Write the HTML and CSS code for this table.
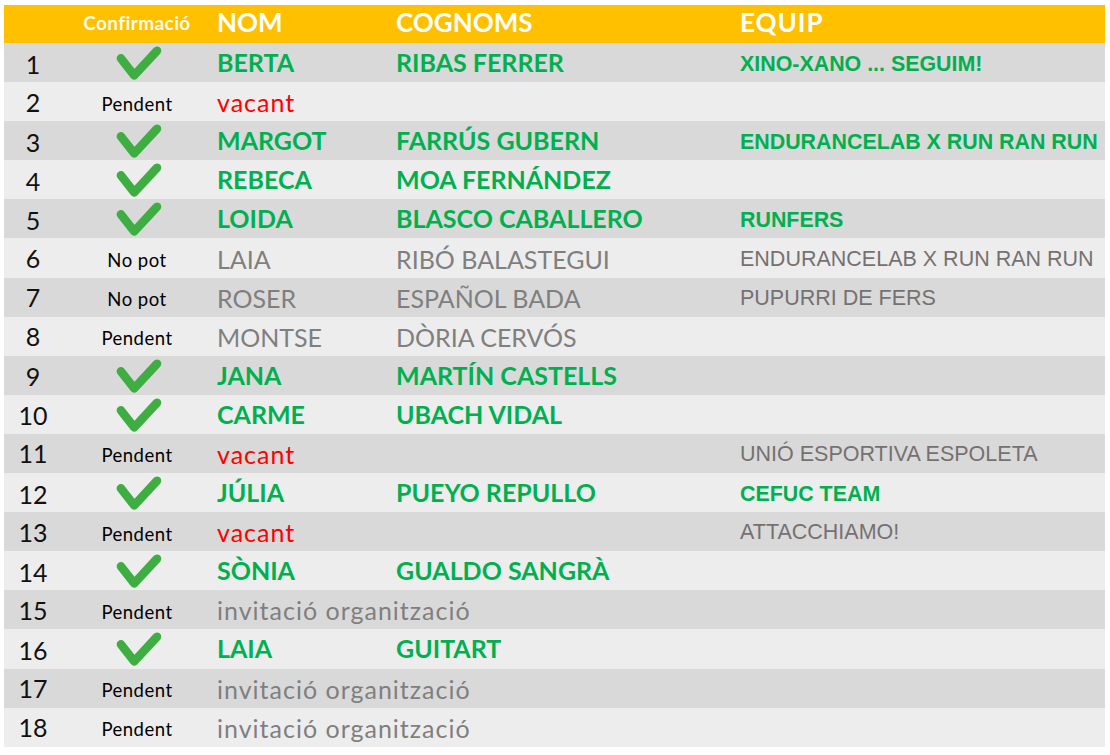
FILE: index.html
```html
<!DOCTYPE html>
<html lang="ca">
<head>
<meta charset="utf-8">
<title>Confirmacions</title>
<link rel="stylesheet" href="styles.css">
</head>
<body>
<div class="table">
  <div class="row head">
    <div class="c-num"></div>
    <div class="c-conf">Confirmació</div>
    <div class="c-name">NOM</div>
    <div class="c-sur">COGNOMS</div>
    <div class="c-team">EQUIP</div>
  </div>

  <div class="row dark">
    <div class="c-num">1</div>
    <div class="c-conf"><svg class="check" viewBox="0 0 50 40"><polyline points="7,13 21,31 45,5"/></svg></div>
    <div class="c-name ok">BERTA</div>
    <div class="c-sur ok">RIBAS FERRER</div>
    <div class="c-team okb">XINO-XANO ... SEGUIM!</div>
  </div>
  <div class="row light">
    <div class="c-num">2</div>
    <div class="c-conf st">Pendent</div>
    <div class="c-name red">vacant</div>
    <div class="c-sur"></div>
    <div class="c-team"></div>
  </div>
  <div class="row dark">
    <div class="c-num">3</div>
    <div class="c-conf"><svg class="check" viewBox="0 0 50 40"><polyline points="7,13 21,31 45,5"/></svg></div>
    <div class="c-name ok">MARGOT</div>
    <div class="c-sur ok">FARRÚS GUBERN</div>
    <div class="c-team okb">ENDURANCELAB X RUN RAN RUN</div>
  </div>
  <div class="row light">
    <div class="c-num">4</div>
    <div class="c-conf"><svg class="check" viewBox="0 0 50 40"><polyline points="7,13 21,31 45,5"/></svg></div>
    <div class="c-name ok">REBECA</div>
    <div class="c-sur ok">MOA FERNÁNDEZ</div>
    <div class="c-team"></div>
  </div>
  <div class="row dark">
    <div class="c-num">5</div>
    <div class="c-conf"><svg class="check" viewBox="0 0 50 40"><polyline points="7,13 21,31 45,5"/></svg></div>
    <div class="c-name ok">LOIDA</div>
    <div class="c-sur ok">BLASCO CABALLERO</div>
    <div class="c-team okb">RUNFERS</div>
  </div>
  <div class="row light">
    <div class="c-num">6</div>
    <div class="c-conf st">No pot</div>
    <div class="c-name grey">LAIA</div>
    <div class="c-sur grey">RIBÓ BALASTEGUI</div>
    <div class="c-team greyt">ENDURANCELAB X RUN RAN RUN</div>
  </div>
  <div class="row dark">
    <div class="c-num">7</div>
    <div class="c-conf st">No pot</div>
    <div class="c-name grey">ROSER</div>
    <div class="c-sur grey">ESPAÑOL BADA</div>
    <div class="c-team greyt">PUPURRI DE FERS</div>
  </div>
  <div class="row light">
    <div class="c-num">8</div>
    <div class="c-conf st">Pendent</div>
    <div class="c-name grey">MONTSE</div>
    <div class="c-sur grey">DÒRIA CERVÓS</div>
    <div class="c-team"></div>
  </div>
  <div class="row dark">
    <div class="c-num">9</div>
    <div class="c-conf"><svg class="check" viewBox="0 0 50 40"><polyline points="7,13 21,31 45,5"/></svg></div>
    <div class="c-name ok">JANA</div>
    <div class="c-sur ok">MARTÍN CASTELLS</div>
    <div class="c-team"></div>
  </div>
  <div class="row light">
    <div class="c-num">10</div>
    <div class="c-conf"><svg class="check" viewBox="0 0 50 40"><polyline points="7,13 21,31 45,5"/></svg></div>
    <div class="c-name ok">CARME</div>
    <div class="c-sur ok">UBACH VIDAL</div>
    <div class="c-team"></div>
  </div>
  <div class="row dark">
    <div class="c-num">11</div>
    <div class="c-conf st">Pendent</div>
    <div class="c-name red">vacant</div>
    <div class="c-sur"></div>
    <div class="c-team greyt">UNIÓ ESPORTIVA ESPOLETA</div>
  </div>
  <div class="row light">
    <div class="c-num">12</div>
    <div class="c-conf"><svg class="check" viewBox="0 0 50 40"><polyline points="7,13 21,31 45,5"/></svg></div>
    <div class="c-name ok">JÚLIA</div>
    <div class="c-sur ok">PUEYO REPULLO</div>
    <div class="c-team okb">CEFUC TEAM</div>
  </div>
  <div class="row dark">
    <div class="c-num">13</div>
    <div class="c-conf st">Pendent</div>
    <div class="c-name red">vacant</div>
    <div class="c-sur"></div>
    <div class="c-team greyt">ATTACCHIAMO!</div>
  </div>
  <div class="row light">
    <div class="c-num">14</div>
    <div class="c-conf"><svg class="check" viewBox="0 0 50 40"><polyline points="7,13 21,31 45,5"/></svg></div>
    <div class="c-name ok">SÒNIA</div>
    <div class="c-sur ok">GUALDO SANGRÀ</div>
    <div class="c-team"></div>
  </div>
  <div class="row dark">
    <div class="c-num">15</div>
    <div class="c-conf st">Pendent</div>
    <div class="c-name grey lower wide">invitació organització</div>
  </div>
  <div class="row light">
    <div class="c-num">16</div>
    <div class="c-conf"><svg class="check" viewBox="0 0 50 40"><polyline points="7,13 21,31 45,5"/></svg></div>
    <div class="c-name ok">LAIA</div>
    <div class="c-sur ok">GUITART</div>
    <div class="c-team"></div>
  </div>
  <div class="row dark">
    <div class="c-num">17</div>
    <div class="c-conf st">Pendent</div>
    <div class="c-name grey lower wide">invitació organització</div>
  </div>
  <div class="row light">
    <div class="c-num">18</div>
    <div class="c-conf st">Pendent</div>
    <div class="c-name grey lower wide">invitació organització</div>
  </div>
</div>
</body>
</html>
```

FILE: styles.css
```css
html, body {
  margin: 0;
  padding: 0;
  background: #ffffff;
}

.table {
  margin: 5px 0 0 4px;
  width: 1101px;
  font-family: Lato, "Open Sans", sans-serif;
}

.row {
  display: grid;
  grid-template-columns: 58px 150px 179px 344px 1fr;
  align-items: center;
  height: 39.1px;
}

.row.head {
  height: 38px;
  background: #ffc000;
  color: #ffffff;
  font-weight: 700;
}

.row.dark { background: #d9d9d9; }
.row.light { background: #ededed; }

.c-num {
  text-align: center;
  font-size: 25px;
  color: #111111;
}

.c-conf {
  text-align: center;
  font-size: 18.5px;
  letter-spacing: 0.5px;
  color: #000000;
  padding-top: 4px;
  align-self: stretch;
  display: flex;
  align-items: center;
  justify-content: center;
}

.head .c-conf {
  color: #fffbe8;
  font-size: 19px;
  letter-spacing: 0.4px;
  padding-top: 0;
  padding-bottom: 3px;
}

.c-name, .c-sur {
  padding-left: 5px;
  font-size: 25px;
  white-space: nowrap;
  padding-top: 1px;
}

.c-team {
  padding-left: 5px;
  white-space: nowrap;
  padding-top: 2px;
}

.head .c-name, .head .c-sur, .head .c-team {
  font-size: 26px;
  padding-top: 0;
  padding-bottom: 5px;
}

.head .c-team { letter-spacing: 1px; }

.ok {
  color: #00b050;
  font-weight: 700;
}

.c-name.ok, .c-sur.ok {
  padding-top: 0;
  padding-bottom: 3px;
}

.okb {
  color: #00b050;
  font-weight: 700;
  font-family: "Liberation Sans", Arial, sans-serif;
  font-size: 21.4px;
}

.greyt {
  color: #767171;
  font-family: "Liberation Sans", Arial, sans-serif;
  font-size: 21.5px;
}

.grey { color: #7f7f7f; }
.red { color: #ff0000; letter-spacing: 1px; }
.lower { letter-spacing: 1px; }

.wide { grid-column: 3 / 6; }

.check {
  width: 48px;
  height: 38px;
  align-self: flex-start;
  margin-top: -1px;
  margin-left: 2px;
  overflow: visible;
}

.check polyline {
  fill: none;
  stroke: #3eae42;
  stroke-width: 9;
  stroke-linecap: round;
  stroke-linejoin: round;
}
```
